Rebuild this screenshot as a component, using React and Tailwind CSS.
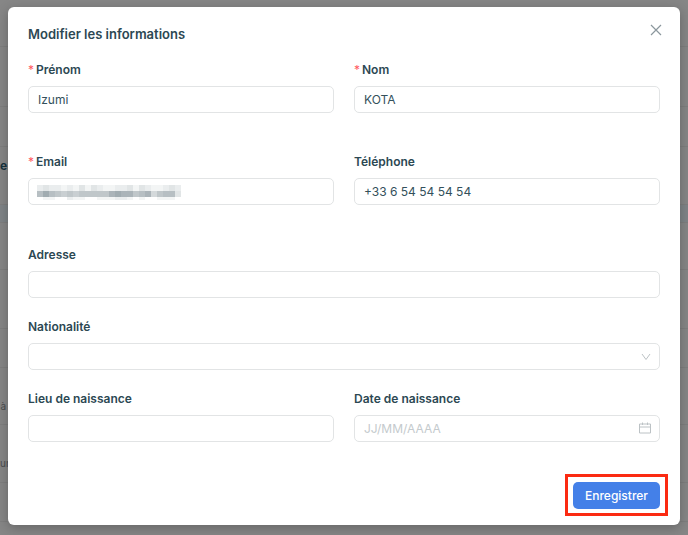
import { useState } from "react";

// rows of the page behind the modal
const pageRows = [
  { height: "h-[47px]" },
  { height: "h-[60px]" },
  { height: "h-[40px]" },
  { height: "h-[58px]", text: "e", style: "text-xs font-bold text-[#16323d] pb-5" },
  { height: "h-[18px]", style: "bg-[#7f8487]" },
  { height: "h-[47px]" },
  { height: "h-[59px]" },
  { height: "h-[39px]" },
  { height: "h-[57px]", text: "à", style: "text-[10px] text-[#4a4d4f] pt-5" },
  { height: "h-[58px]", text: "ur", style: "text-[10px] text-[#4a4d4f] pt-5" },
  { height: "h-[39px]" },
];

// grey level of each block of the masked email, one string per line
const maskShades = ["232212131321122313211232", "797656566666898867846773", "011002110011122101001110"];
const shadeColors = [
  "#ffffff",
  "#f3f5f5",
  "#eaedee",
  "#e1e5e6",
  "#d4d9db",
  "#c9cfd2",
  "#c0c7ca",
  "#b7bfc3",
  "#abb4b9",
  "#a1acb1",
];

const inputClass =
  "block h-[27px] w-full rounded-[5px] border border-[#e2e4e5] bg-white px-[9px] text-xs text-[#33505b] outline-none placeholder:text-[#c4cacd] focus:border-[#4480e8]";

function Field({ id, label, required, children }) {
  return (
    <div>
      <label
        htmlFor={id}
        className="mb-[7px] flex gap-[3px] text-xs leading-[18px] font-semibold text-[#2c4853]"
      >
        {required && <span className="w-[5px] font-normal text-[#ff5a5f]">*</span>}
        {label}
      </label>
      {children}
    </div>
  );
}

function EmailMask() {
  return (
    <svg
      className="pointer-events-none absolute top-[7px] left-[9px]"
      width="144"
      height="16"
      shapeRendering="crispEdges"
      aria-hidden="true"
    >
      {maskShades.map((line, y) =>
        line
          .split("")
          .map((shade, x) => (
            <rect
              key={`${x}-${y}`}
              x={x * 6}
              y={y * 6}
              width="6"
              height={y === 2 ? 3 : 6}
              fill={shadeColors[Number(shade)]}
            />
          )),
      )}
    </svg>
  );
}

function App() {
  const [isOpen, setIsOpen] = useState(true);
  const [formData, setFormData] = useState({
    firstName: "Izumi",
    lastName: "KOTA",
    email: "",
    phone: "+33 6 54 54 54 54",
    address: "",
    nationality: "",
    birthPlace: "",
    birthDate: "",
  });

  const handleChange = (e) => {
    setFormData({ ...formData, [e.target.name]: e.target.value });
  };

  const handleSubmit = (e) => {
    e.preventDefault();
    setIsOpen(false);
  };

  return (
    <div className="relative min-h-screen bg-[#868686] font-['Inter',sans-serif]">
      {/* Page behind */}
      <div className="absolute inset-0 overflow-hidden" aria-hidden="true">
        {pageRows.map((row, index) => (
          <div
            key={index}
            className={`flex items-center border-b border-[#7e7e7e] ${row.height} ${row.style || ""}`}
          >
            {row.text && (
              <span className="flex min-w-[6px] justify-end whitespace-nowrap">{row.text}</span>
            )}
          </div>
        ))}
      </div>

      {/* Modal */}
      {isOpen && (
        <div className="relative px-2 pt-[7px] pb-[10px]">
          <div
            role="dialog"
            aria-labelledby="modal-title"
            className="relative rounded-md bg-white px-5 pt-[18px] pb-[9px] shadow-[0_3px_12px_rgba(0,0,0,0.25)]"
          >
            <button
              type="button"
              aria-label="Fermer"
              onClick={() => setIsOpen(false)}
              className="absolute top-[17px] right-[18px] text-[#8b979d]"
            >
              <svg width="12" height="12" viewBox="0 0 12 12" fill="none" stroke="currentColor">
                <path d="M1 1l10 10M11 1L1 11" strokeWidth="1.2" />
              </svg>
            </button>
            <h1 id="modal-title" className="text-[13px] leading-[18px] font-semibold text-[#2c4853]">
              Modifier les informations
            </h1>

            <form onSubmit={handleSubmit} className="mt-[18px]">
              <div className="grid grid-cols-2 gap-x-5 gap-y-10">
                <Field id="firstName" label="Prénom" required>
                  <input
                    id="firstName"
                    name="firstName"
                    className={inputClass}
                    value={formData.firstName}
                    onChange={handleChange}
                  />
                </Field>
                <Field id="lastName" label="Nom" required>
                  <input
                    id="lastName"
                    name="lastName"
                    className={inputClass}
                    value={formData.lastName}
                    onChange={handleChange}
                  />
                </Field>
                <Field id="email" label="Email" required>
                  <div className="relative">
                    <input
                      id="email"
                      name="email"
                      type="email"
                      className={inputClass}
                      value={formData.email}
                      onChange={handleChange}
                    />
                    {!formData.email && <EmailMask />}
                  </div>
                </Field>
                <Field id="phone" label="Téléphone">
                  <input
                    id="phone"
                    name="phone"
                    type="tel"
                    className={inputClass}
                    value={formData.phone}
                    onChange={handleChange}
                  />
                </Field>
              </div>

              <div className="mt-[41px] grid grid-cols-2 gap-x-5 gap-y-5">
                <div className="col-span-2">
                  <Field id="address" label="Adresse">
                    <input
                      id="address"
                      name="address"
                      className={inputClass}
                      value={formData.address}
                      onChange={handleChange}
                    />
                  </Field>
                </div>
                <div className="col-span-2">
                  <Field id="nationality" label="Nationalité">
                    <div className="relative">
                      <select
                        id="nationality"
                        name="nationality"
                        className={`${inputClass} appearance-none`}
                        value={formData.nationality}
                        onChange={handleChange}
                      >
                        <option value=""></option>
                      </select>
                      <svg
                        className="pointer-events-none absolute top-[10px] right-[9px] text-[#bcc2c5]"
                        width="10"
                        height="8"
                        viewBox="0 0 10 8"
                        fill="none"
                        stroke="currentColor"
                      >
                        <path d="M1 1l4 5.5L9 1" />
                      </svg>
                    </div>
                  </Field>
                </div>
                <Field id="birthPlace" label="Lieu de naissance">
                  <input
                    id="birthPlace"
                    name="birthPlace"
                    className={inputClass}
                    value={formData.birthPlace}
                    onChange={handleChange}
                  />
                </Field>
                <Field id="birthDate" label="Date de naissance">
                  <div className="relative">
                    <input
                      id="birthDate"
                      name="birthDate"
                      placeholder="JJ/MM/AAAA"
                      className={inputClass}
                      value={formData.birthDate}
                      onChange={handleChange}
                    />
                    <svg
                      className="pointer-events-none absolute top-[7px] right-[9px] text-[#bcc2c5]"
                      width="12"
                      height="12"
                      viewBox="0 0 12 12"
                      fill="none"
                      stroke="currentColor"
                    >
                      <path d="M.5 2h11v9H.5zM.5 5h11M3.5 .5v2.5M8.5 .5v2.5" />
                    </svg>
                  </div>
                </Field>
              </div>

              <div className="-mr-2 mt-8 flex justify-end">
                <div className="border-[3px] border-[#fb2a12] px-[5px] pt-[5px] pb-1">
                  <button
                    type="submit"
                    className="block h-[27px] rounded-[5px] bg-[#4480e8] px-3 text-xs font-medium text-white"
                  >
                    Enregistrer
                  </button>
                </div>
              </div>
            </form>
          </div>
        </div>
      )}
    </div>
  );
}

export default App;
